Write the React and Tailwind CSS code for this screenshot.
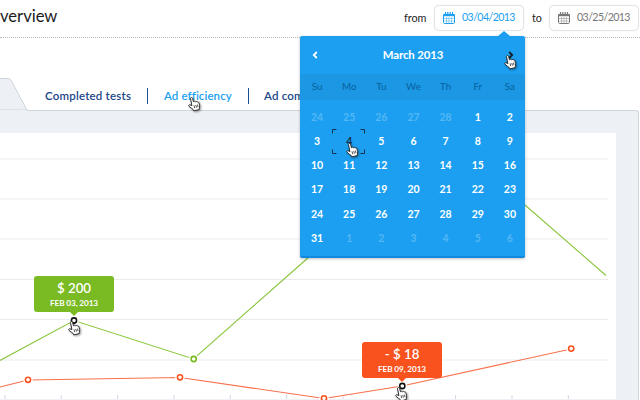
const DAYS = ["Su", "Mo", "Tu", "We", "Th", "Fr", "Sa"];
const DATES = [24, 25, 26, 27, 28, ...Array.from({ length: 31 }, (_, i) => i + 1), 1, 2, 3, 4, 5, 6];
const GRID_LINES = [159, 199, 239, 279.5, 319.5, 360];
const TICKS = [5, 61.3, 117.6, 174, 230.3, 286.6, 343, 399.3, 455.6, 512, 568.3];

function Hand({ className }) {
  return (
    <svg viewBox="0 0 14 16" className={"absolute z-20 h-[15px] w-[13px] drop-shadow-[1px_1px_1px_rgba(0,0,0,0.4)] " + className}>
      <path
        d="M2.7 1.8C2.4.4 4.5.1 4.9 1.4L5.9 5.1C6.4 4.4 7.5 4.4 7.9 5.1C8.5 4.5 9.5 4.6 9.8 5.3C10.6 4.9 11.5 5.3 11.7 6.1L12.5 9C12.8 10.5 12.4 11.2 12.2 12.2L12.2 13.4L6.3 14.9L5.7 13.5C4.3 12.8 2.8 11.1 1 9.8C.3 9.2 1 8 2.1 8.3L4.2 9.2Z"
        fill="#fff" stroke="#222" strokeWidth="1" strokeLinejoin="round"
      />
      <path d="M6.5 8.9l.7 3M8.4 8.5l.7 2.9M10.2 8.1l.6 2.8" stroke="#333" strokeWidth="0.9" />
    </svg>
  );
}

function CalendarIcon() {
  return (
    <svg viewBox="0 0 12 12" className="h-[12px] w-[12px] shrink-0" fill="none" stroke="currentColor">
      <path d="M.5 2.5h11v7.8c0 .7-.5 1.2-1.2 1.2H1.7C1 11.5.5 11 .5 10.3z" />
      <path d="M1 3.3h10" strokeWidth="1.8" />
      <path d="M2.5 0v2.8M4.8 0v2.8M7.2 0v2.8M9.5 0v2.8" strokeWidth="1.2" />
      <path d="M1 6.5h10M1 9h10M3.5 5v6M6 5v6M8.5 5v6" strokeWidth=".7" opacity=".6" />
    </svg>
  );
}

function DateField({ value, className }) {
  return (
    <div className={"flex h-[26px] w-[90px] items-center rounded-[5px] border border-[#e2e4e5] bg-white pl-[8px] shadow-[0_0_1px_#dfe2e4] " + className}>
      <CalendarIcon />
      <span className="ml-[7px] text-[10.6px] tracking-[-0.58px] whitespace-nowrap">{value}</span>
    </div>
  );
}

function Tooltip({ amount, date, className, arrow }) {
  return (
    <div className={"absolute z-10 flex h-[36px] w-[80px] flex-col items-center rounded-[3px] text-white " + className}>
      <span className="mt-[4px] text-[13.3px] leading-[17px] font-semibold whitespace-pre">{amount}</span>
      <span className="mt-[1px] text-[8.2px] leading-[10px] font-bold tracking-[-0.1px] whitespace-nowrap">{date}</span>
      <span className={"absolute top-[36px] left-[36px] border-x-4 border-t-4 border-x-transparent " + arrow} />
    </div>
  );
}

function Calendar() {
  return (
    <div className="absolute top-[36px] left-[300px] z-10 flex h-[222px] w-[225px] flex-col rounded-[2px] border-b-2 border-[#0f8ade] bg-[#1c9ff1] text-white shadow-[0_1px_3px_rgba(0,0,0,0.25)]">
      <span className="absolute -top-[5px] left-[198px] border-x-[6px] border-b-[5px] border-x-transparent border-b-[#1c9ff1]" />
      <div className="flex h-[38px] items-center justify-between pr-[11px] pl-[12px]">
        <svg viewBox="0 0 6 8" className="h-[8px] w-[6px]" fill="none" stroke="#fff" strokeWidth="1.8"><path d="M4.8 1L1.8 4l3 3" /></svg>
        <span className="text-[11.4px] font-bold tracking-[-0.1px]">March 2013</span>
        <svg viewBox="0 0 6 8" className="h-[8px] w-[6px]" fill="none" stroke="#10202c" strokeWidth="1.8"><path d="M1.2 1l3 3-3 3" /></svg>
      </div>
      <div className="flex h-[26px] shrink-0 items-center bg-[#1b97e4]">
        <div className="-mt-[2px] ml-px grid w-[225px] shrink-0 grid-cols-7 text-center text-[9.8px] text-[#09619d]">
          {DAYS.map((d) => <span key={d}>{d}</span>)}
        </div>
      </div>
      <div className="mt-[6px] ml-px grid w-[225px] grid-cols-7 text-center text-[10.5px] font-bold">
        {DATES.map((n, i) => (
          <span
            key={i}
            className={
              "relative flex h-[24.1px] items-center justify-center " +
              (i < 5 || i > 35 ? "text-[#52b7f5]" : i === 8 ? "text-[#123049]" : "text-white")
            }
          >
            {n}
            {i === 8 && (
              <svg viewBox="0 0 33 25" className="absolute -top-px -left-px h-[25px] w-[33px]" fill="none" stroke="#12334e">
                <path d="M.5 4.5v-4h4M28.5.5h4v4M.5 20.5v4h4M28.5 24.5h4v-4" />
              </svg>
            )}
          </span>
        ))}
      </div>
    </div>
  );
}

function Dot({ x, y, color }) {
  return (
    <g>
      <circle cx={x} cy={y} r="4.8" fill="#fff" />
      <circle cx={x} cy={y} r="2.6" fill="#fff" stroke={color} strokeWidth="1.6" />
    </g>
  );
}

function Chart() {
  return (
    <svg viewBox="0 133 616 267" className="block h-[267px] w-[616px]" fill="none">
      {GRID_LINES.map((y) => <path key={y} d={`M0 ${y}H608`} stroke="#e9ebed" />)}
      {TICKS.map((x) => <path key={x} d={`M${x} 395V399`} stroke="#d3d8dd" />)}
      <path d="M0 399.5H616" stroke="#eef1f5" />
      <path d="M0 360.5L74 320.5L193.5 359L309 257L420 120L525 205L606 275.5" stroke="#8bc63f" strokeWidth="1.1" />
      <path d="M0 387L28 380L180 377.5L324 398.5L402 386L571 349" stroke="#f9704b" strokeWidth="1.1" />
      <Dot x={74} y={320.5} color="#111" />
      <Dot x={193.7} y={359} color="#7aba22" />
      <Dot x={28} y={379.8} color="#f65420" />
      <Dot x={180} y={377.3} color="#f65420" />
      <Dot x={324} y={398.3} color="#f65420" />
      <Dot x={402.3} y={386} color="#111" />
      <Dot x={571.2} y={348.6} color="#f65420" />
    </svg>
  );
}

export default function App() {
  return (
    <div className="relative flex h-[400px] w-[640px] flex-col overflow-hidden bg-white font-['Lato',sans-serif]">
      <header className="flex h-[38px] shrink-0 items-center border-b border-dotted border-[#b4babd] text-[#222]">
        <h1 className="-mt-[4px] w-[404px] text-[16.6px] text-[#1c1c1c]">verview</h1>
        <div className="-mt-[1px] flex items-center text-[10.8px]">
          <span className="w-[30px]">from</span>
          <DateField value="03/04/2013" className="text-[#1c9ff1]" />
          <span className="w-[25px] pl-[8px]">to</span>
          <DateField value="03/25/2013" className="text-[#777]" />
        </div>
      </header>
      <div className="flex h-[72px] shrink-0">
        <svg viewBox="0 0 28 72" className="h-[72px] w-[28px] shrink-0">
          <path d="M-1 40.5H8.5Q10 40.5 10.8 42L27 72H-1Z" fill="#edf1f6" stroke="#ccd3d8" />
        </svg>
        <nav className="mt-[50px] flex h-[16px] items-center self-start text-[11.5px] font-semibold tracking-[0.2px] whitespace-nowrap text-[#1a4789]">
          <span className="ml-[17px] w-[102px]">Completed tests</span>
          <span className="h-[16px] w-px bg-[#1a4f91]" />
          <span className="ml-[16px] w-[84px] tracking-[0.1px] text-[#1c9ff1]">Ad efficiency</span>
          <span className="h-[16px] w-px bg-[#1a4f91]" />
          <span className="ml-[15px]">Ad com</span>
        </nav>
      </div>
      <div className="flex shrink-0">
        <div className="h-[23px] w-[27px] bg-[#edf1f6]" />
        <div className="h-[23px] w-[612px] rounded-tr-[3px] border-t border-r border-[#d0d6da] bg-[#edf1f6]" />
      </div>
      <main className="flex h-[267px] w-[639px] shrink-0 border-r border-[#d0d6da] bg-[#edf1f6]">
        <div className="h-[267px] w-[616px] bg-white"><Chart /></div>
      </main>
      <Tooltip amount="$ 200" date="FEB 03, 2013" className="top-[276px] left-[34px] bg-[#7aba22]" arrow="border-t-[#7aba22]" />
      <Tooltip amount="- $ 18" date="FEB 09, 2013" className="top-[342px] left-[362px] bg-[#f9521e]" arrow="border-t-[#f9521e]" />
      <Calendar />
      <Hand className="top-[97px] left-[188px]" />
      <Hand className="top-[55px] left-[504px]" />
      <Hand className="top-[143px] left-[346px]" />
      <Hand className="top-[321px] left-[68px]" />
      <Hand className="top-[387px] left-[395px]" />
    </div>
  );
}
